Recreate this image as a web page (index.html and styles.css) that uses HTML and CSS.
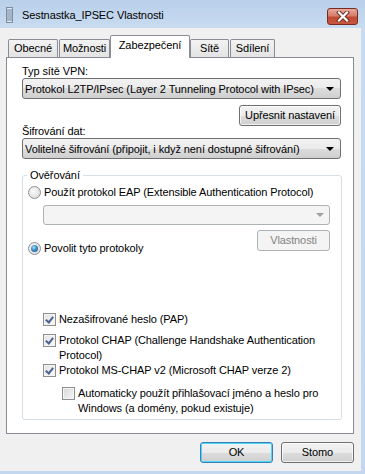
FILE: index.html
```html
<!DOCTYPE html>
<html lang="cs">
<head>
    <meta charset="UTF-8">
    <meta name="viewport" content="width=device-width, initial-scale=1.0">
    <title>Sestnastka_IPSEC Vlastnosti</title>
    <link rel="stylesheet" href="styles.css">
</head>
<body>
    <div class="window">
        <div class="titlebar">
            <svg class="app-icon" width="8" height="16" viewBox="0 0 8 16">
                <rect x="0.5" y="0.5" width="6" height="15" fill="#dfe6ee" stroke="#7f8fa3"/>
                <path d="M1 3h5M1 5h5M1 7h5M1 9h5M1 11h5M1 13h5" stroke="#6d84a3" stroke-width="1"/>
            </svg>
            <span class="title">Sestnastka_IPSEC Vlastnosti</span>
            <div class="close-btn">
                <svg width="14" height="11" viewBox="0 0 14 11">
                    <path d="M3 1.5l8 8M11 1.5l-8 8" stroke="#6b2a22" stroke-width="4" stroke-linecap="square"/>
                    <path d="M3 1.5l8 8M11 1.5l-8 8" stroke="#fff" stroke-width="2.2" stroke-linecap="square"/>
                </svg>
            </div>
        </div>

        <div class="client">
            <div class="tabs">
                <div class="tab tab-obecne">Obecné</div>
                <div class="tab tab-moznosti">Možnosti</div>
                <div class="tab tab-selected">Zabezpečení</div>
                <div class="tab tab-site">Sítě</div>
                <div class="tab tab-sdileni">Sdílení</div>
            </div>

            <div class="panel">
                <div class="label">Typ sítě VPN:</div>
                <div class="combo">
                    <span class="combo-text">Protokol L2TP/IPsec (Layer 2 Tunneling Protocol with IPsec)</span>
                    <span class="arrow"></span>
                </div>
                <div class="right-row">
                    <div class="btn btn-advanced">Upřesnit nastavení</div>
                </div>
                <div class="label label-tight">Šifrování dat:</div>
                <div class="combo">
                    <span class="combo-text">Volitelné šifrování (připojit, i když není dostupné šifrování)</span>
                    <span class="arrow"></span>
                </div>

                <fieldset class="group">
                    <legend>Ověřování</legend>
                    <div class="option">
                        <span class="radio"></span>
                        <span>Použít protokol EAP (Extensible Authentication Protocol)</span>
                    </div>
                    <div class="combo combo-disabled">
                        <span class="combo-text"></span>
                        <span class="arrow"></span>
                    </div>
                    <div class="split-row">
                        <div class="option option-allow">
                            <span class="radio radio-on"></span>
                            <span>Povolit tyto protokoly</span>
                        </div>
                        <div class="btn btn-disabled btn-props">Vlastnosti</div>
                    </div>

                    <div class="option check check-first">
                        <span class="box checked"></span>
                        <span>Nezašifrované heslo (PAP)</span>
                    </div>
                    <div class="option check check-chap">
                        <span class="box checked"></span>
                        <span>Protokol CHAP (Challenge Handshake Authentication Protocol)</span>
                    </div>
                    <div class="option check">
                        <span class="box checked"></span>
                        <span>Protokol MS-CHAP v2 (Microsoft CHAP verze 2)</span>
                    </div>
                    <div class="option check check-auto">
                        <span class="box"></span>
                        <span>Automaticky použít přihlašovací jméno a heslo pro Windows (a domény, pokud existuje)</span>
                    </div>
                </fieldset>
            </div>

            <div class="footer">
                <div class="btn btn-default">OK</div>
                <div class="btn">Stomo</div>
            </div>
        </div>
    </div>
</body>
</html>
```

FILE: styles.css
```css
body {
    margin: 0;
    font-family: "Liberation Sans", Arial, sans-serif;
    font-size: 11px;
    letter-spacing: -0.1px;
    color: #000;
}
.window {
    width: 365px;
    height: 474px;
    background: linear-gradient(180deg, #b9d0ea 0, #c8dbf0 28px, #c3d8ee 100%);
    overflow: hidden;
}
.titlebar {
    height: 28px;
    display: flex;
    align-items: center;
    padding-left: 6px;
    padding-right: 7px;
    box-sizing: border-box;
}
.app-icon {
    margin-right: 8px;
    margin-top: 1px;
}
.title {
    flex: 1;
    color: #000;
    margin-top: 1px;
}
.close-btn {
    width: 31px;
    height: 17px;
    box-sizing: border-box;
    margin-top: 4px;
    border: 1px solid #7a2b22;
    border-radius: 3px;
    background: linear-gradient(180deg, #e9a99b 0, #d77d6c 45%, #c04a34 55%, #c9573f 100%);
    display: flex;
    align-items: center;
    justify-content: center;
}
.client {
    width: 361px;
    height: 443px;
    box-sizing: border-box;
    background: #f0f0f0;
    padding: 7px 7px 0 6px;
}
.tabs {
    display: flex;
    align-items: flex-end;
    gap: 1px;
    height: 23px;
    margin-left: 2px;
}
.tab {
    height: 18px;
    margin-bottom: 1px;
    box-sizing: border-box;
    border: 1px solid #898c95;
    border-bottom: none;
    border-radius: 2px 2px 0 0;
    background: linear-gradient(180deg, #f3f3f3, #e3e3e3);
    text-align: center;
    line-height: 17px;
}
.tab-obecne { width: 50px; }
.tab-moznosti { width: 51px; }
.tab-site { width: 39px; }
.tab-sdileni { width: 45px; }
.tab-selected {
    width: 80px;
    height: 23px;
    margin: 0 -1px;
    background: #fff;
    position: relative;
    z-index: 1;
    line-height: 18px;
}
.panel {
    width: 348px;
    height: 377px;
    margin-top: -1px;
    box-sizing: border-box;
    border: 1px solid #898c95;
    background: #fff;
    padding: 6px 12px 0 15px;
}
.label {
    line-height: 14px;
}
.label-tight {
    margin-top: -2px;
}
.combo {
    height: 21px;
    box-sizing: border-box;
    border: 1px solid #707070;
    border-radius: 3px;
    background: linear-gradient(180deg, #f2f2f2 0, #ebebeb 50%, #dddddd 50%, #cfcfcf 100%);
    display: flex;
    align-items: center;
    padding: 0 6px 0 2px;
}
.combo-text {
    flex: 1;
    white-space: nowrap;
    overflow: hidden;
}
.arrow {
    width: 0;
    height: 0;
    border-left: 4px solid transparent;
    border-right: 4px solid transparent;
    border-top: 4px solid #000;
}
.right-row {
    display: flex;
    justify-content: flex-end;
    margin-top: 6px;
}
.btn {
    width: 73px;
    height: 21px;
    box-sizing: border-box;
    border: 1px solid #707070;
    border-radius: 3px;
    background: linear-gradient(180deg, #f2f2f2 0, #ebebeb 50%, #dddddd 50%, #cfcfcf 100%);
    box-shadow: inset 0 0 0 1px rgba(255, 255, 255, 0.7);
    text-align: center;
    line-height: 19px;
}
.btn-advanced {
    width: 102px;
}
.btn-default {
    border-color: #3c7fb1;
    box-shadow: inset 0 0 0 1px #48d8fb;
}
.btn-disabled {
    border-color: #adb2b5;
    background: #f4f4f4;
    box-shadow: none;
    color: #838383;
}
.group {
    margin: 9px -1px 0 0;
    padding: 2px 11px 3px 4px;
    border: 1px solid #d5dfe5;
    border-radius: 3px;
    min-width: 0;
}
.group legend {
    padding: 0 3px;
    line-height: 15px;
}
.option {
    display: flex;
    align-items: flex-start;
    line-height: 15px;
}
.radio {
    flex: none;
    width: 13px;
    height: 13px;
    box-sizing: border-box;
    margin: 1px 3px 0 1px;
    border: 1px solid #8e8f8f;
    border-radius: 50%;
    background: radial-gradient(circle at 40% 40%, #fbfbfb 0, #e6e6e6 55%, #d2d2d2 100%);
    position: relative;
}
.radio-on::after {
    content: "";
    position: absolute;
    left: 2px;
    top: 2px;
    width: 7px;
    height: 7px;
    border-radius: 50%;
    background: radial-gradient(circle at 40% 35%, #a6ddf9 0, #3a8cc4 45%, #1b4f80 100%);
}
.combo-disabled {
    width: 287px;
    height: 20px;
    margin: 5px 0 0 16px;
    border-color: #adb2b5;
    background: #f4f4f4;
    padding-right: 5px;
}
.combo-disabled .arrow {
    border-top-color: #a0a0a0;
}
.split-row {
    display: flex;
    justify-content: space-between;
    align-items: flex-start;
    margin-top: 5px;
}
.option-allow {
    margin-top: 11px;
}
.check {
    margin-left: 16px;
}
.check-first {
    margin-top: 56px;
}
.check-chap {
    margin-top: 6px;
}
.check-auto {
    margin-left: 35px;
    margin-top: 8px;
}
.box {
    flex: none;
    width: 13px;
    height: 13px;
    box-sizing: border-box;
    margin: 1px 3px 0 0;
    border: 1px solid #8e8f8f;
    background: linear-gradient(135deg, #d6d6d6, #f8f8f8);
    box-shadow: inset 0 0 0 1px #f4f4f4;
    position: relative;
}
.box.checked {
    background: linear-gradient(135deg, #e2e2e2, #fbfbfb);
}
.box.checked::after {
    content: "";
    position: absolute;
    left: 3px;
    top: 1px;
    width: 3px;
    height: 6px;
    border: solid #4c6290;
    border-width: 0 2px 2px 0;
    transform: rotate(38deg);
}
.footer {
    display: flex;
    justify-content: flex-end;
    gap: 8px;
    margin-top: 8px;
}
```
